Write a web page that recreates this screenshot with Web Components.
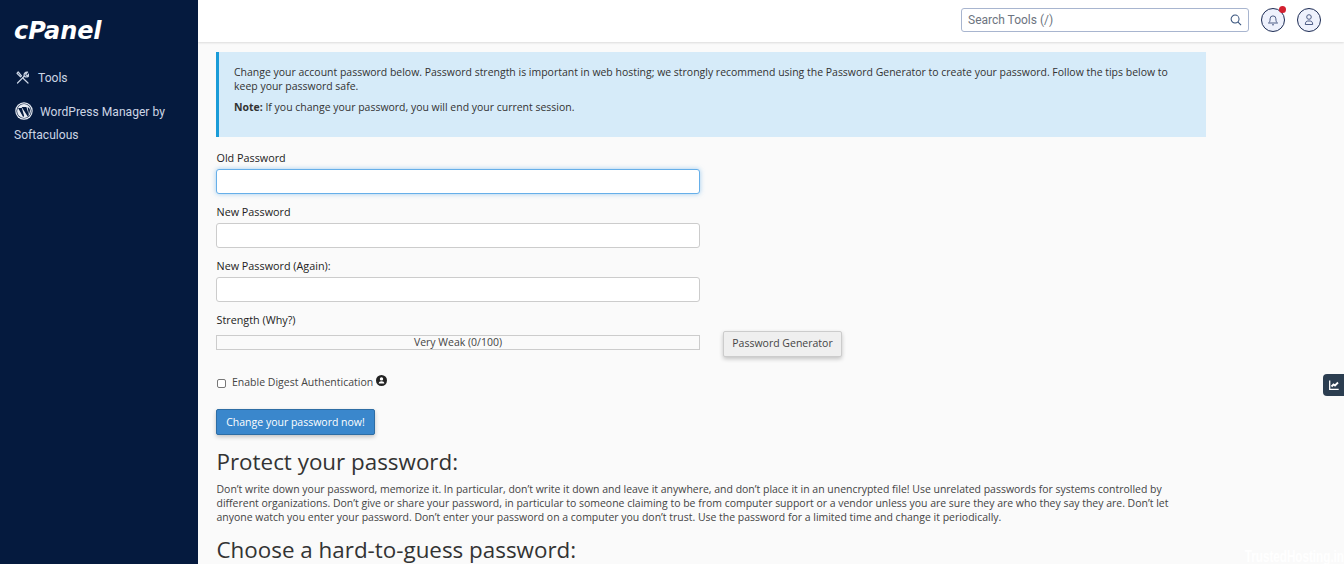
<!DOCTYPE html>
<html lang="en">
<head>
<meta charset="utf-8">
<title>Change Password - cPanel</title>
<style>
html, body { margin: 0; height: 564px; overflow: hidden; background: #fafafa; }
</style>
</head>
<body>
<cp-app>
	<cp-sidebar slot="side"></cp-sidebar>
	<cp-topbar slot="top"></cp-topbar>
	<cp-alert>
		<p>Change your account password below. Password strength is important in web hosting; we strongly recommend using the Password Generator to create your password. Follow the tips below to keep your password safe.</p>
		<p><b>Note:</b> If you change your password, you will end your current session.</p>
	</cp-alert>
	<cp-field label="Old Password" focused></cp-field>
	<cp-field label="New Password"></cp-field>
	<cp-field label="New Password (Again):"></cp-field>
	<cp-strength></cp-strength>
	<cp-digest></cp-digest>
	<cp-submit>Change your password now!</cp-submit>
	<cp-tip heading="Protect your password:">Don’t write down your password, memorize it. In particular, don’t write it down and leave it anywhere, and don’t place it in an unencrypted file! Use unrelated passwords for systems controlled by different organizations. Don’t give or share your password, in particular to someone claiming to be from computer support or a vendor unless you are sure they are who they say they are. Don’t let anyone watch you enter your password. Don’t enter your password on a computer you don’t trust. Use the password for a limited time and change it periodically.</cp-tip>
	<cp-tip heading="Choose a hard-to-guess password:" last></cp-tip>
	<cp-sidetab slot="over"></cp-sidetab>
	<cp-watermark slot="over"></cp-watermark>
</cp-app>

<script>
(function() {
	function define(name, html, init) {
		customElements.define(name, class extends HTMLElement {
			constructor() {
				super();
				this.attachShadow({mode: "open"}).innerHTML = html;
			}
			connectedCallback() {
				if (init) init(this, this.shadowRoot);
			}
		});
	}

	define("cp-app", `
		<style>
		:host { display: grid; grid-template-columns: 198px 1fr; height: 564px; overflow: hidden; position: relative; font-family: "Open Sans", sans-serif; }
		.main { display: flex; flex-direction: column; min-width: 0; height: 564px; overflow: hidden; }
		.content { padding: 10px 138px 0 18px; }
		</style>
		<slot name="side"></slot>
		<div class="main">
			<slot name="top"></slot>
			<div class="content"><slot></slot></div>
		</div>
		<slot name="over"></slot>
	`);

	define("cp-sidebar", `
		<style>
		:host { display: block; background: #051a3e; color: #ccd5e4; font: 12.100px/23px Roboto, sans-serif; height: 564px; }
		.logo { display: block; padding: 16px 0 0 14px; height: 35px; font: italic 700 24px/30px "DejaVu Sans", sans-serif; color: #fff; letter-spacing: -0.1px; }
		nav { padding: 15px 14px 0; margin-top: 1px; }
		a { display: block; color: inherit; text-decoration: none; margin-bottom: 11px; }
		svg { vertical-align: middle; }
		.t svg { margin: -3px 9px 0 2px; }
		.w svg { margin: -3px 7px 0 1px; }
		</style>
		<span class="logo">cPanel</span>
		<nav>
			<a class="t" href="#"><svg width="13" height="13" viewBox="0 0 13 13" fill="none" stroke="#ccd5e4" stroke-width="1.200" stroke-linecap="round" stroke-linejoin="round"><path d="M1.500 12 8.500 5"/><path d="M8.300 5.200C7.500 3 9.300.6 11.600 1.100L9.800 3l.4 1.300 1.300.4L13 3c.3 2.300-2 4-4.700 2.200"/><path d="M1 2.400 2.200 1l3.300 3.800-1 1zM6.800 7 12 12"/></svg>Tools</a>
			<a class="w" href="#"><svg width="18" height="18" viewBox="0 0 19 19"><circle cx="9.500" cy="9.500" r="9.200" fill="#e8ecf3"/><circle cx="9.500" cy="9.500" r="8" fill="#051a3e"/><circle cx="9.500" cy="9.500" r="7.300" fill="#e8ecf3"/><path d="M3.300 6.400h3.900l2.500 8.400-1.100 1.100zM7 5.300h5l2.700 8.500-1.300 1.400zM13.300 5.600c1.600.6 2.500 1.700 2.500 3.500 0 1.300-.5 2.500-1.100 3.700z" fill="#051a3e"/></svg>WordPress Manager by Softaculous</a>
		</nav>
	`);

	define("cp-topbar", `
		<style>
		:host { display: flex; flex: none; align-items: center; justify-content: flex-end; height: 42px; background: #fff; box-shadow: 0 1px 2px rgba(0,0,0,.12); padding: 0 23px 3px 0; box-sizing: border-box; gap: 12px; position: relative; }
		.search { display: flex; align-items: center; justify-content: space-between; box-sizing: border-box; width: 288px; height: 24px; border: 1px solid #a8b5cf; border-radius: 3px; padding: 0 6px; color: #6d7480; font: 12px Roboto, sans-serif; }
		.round { position: relative; box-sizing: border-box; display: flex; align-items: center; justify-content: center; width: 24px; height: 24px; border: 1px solid #1b2a52; border-radius: 50%; background: #eef1fc; }
		.dot { position: absolute; top: -3px; right: -2px; width: 7px; height: 7px; border-radius: 50%; background: #d3202f; }
		</style>
		<div class="search"><span>Search Tools (/)</span>
			<svg width="12" height="12" viewBox="0 0 13 13" fill="none" stroke="#34507a" stroke-width="1.100"><circle cx="5.500" cy="5.500" r="4.300"/><path d="M8.700 8.700 12 12"/></svg>
		</div>
		<div class="round"><svg width="12" height="12" viewBox="0 0 12 12" fill="none" stroke="#4d5c85" stroke-width="1"><path d="M1.500 9h9c-1-.8-1.600-1.500-1.600-4.200a2.900 2.900 0 0 0-5.800 0C3.100 7.500 2.500 8.200 1.500 9zM5 10.800h2"/></svg><span class="dot"></span></div>
		<div class="round"><svg width="12" height="12" viewBox="0 0 12 12" fill="none" stroke="#4d5c85" stroke-width="1"><circle cx="6" cy="3" r="2.300"/><path d="M2.300 10.500c0-2.500 1.200-3.500 2.500-3.500h2.400c1.300 0 2.500 1 2.500 3.500z"/></svg></div>
	`);

	define("cp-alert", `
		<style>
		:host { display: block; box-sizing: border-box; height: 85px; padding: 13px 18px 0 15px; background: #d6ebf9; border-left: 3px solid #1a9cd8; color: #333; font-size: 10.480px; line-height: 14px; }
		::slotted(p) { margin: 0 0 7px; }
		</style>
		<slot></slot>
	`);

	define("cp-field", `
		<style>
		:host { display: block; margin-top: 14px; width: 484px; color: #222; font-size: 10.800px; line-height: 14px; }
		:host(:not([focused])) { margin-top: 11px; }
		label { display: block; padding-left: .5px; }
		.box { box-sizing: border-box; height: 25px; margin-top: 4px; background: #fff; border: 1px solid #ccc; border-radius: 3px; }
		:host([focused]) .box { border-color: #66afe9; box-shadow: 0 0 5px rgba(102,175,233,.6); }
		</style>
		<label></label><div class="box"></div>
	`, function(el, root) {
		root.querySelector("label").textContent = el.getAttribute("label");
	});

	define("cp-strength", `
		<style>
		:host { display: block; margin-top: 11px; color: #222; font-size: 10.800px; line-height: 14px; }
		.label { padding-left: .5px; }
		.row { display: flex; align-items: flex-start; gap: 23px; margin-top: 4px; font-size: 10.500px; }
		.bar { box-sizing: border-box; width: 484px; height: 15px; margin-top: 4px; border: 1px solid #ccc; text-align: center; line-height: 13px; color: #444; }
		.gen { box-sizing: border-box; width: 119px; height: 26px; padding-bottom: 2px; display: flex; align-items: center; justify-content: center; background: #efefef; border: 1px solid #ccc; border-radius: 2px; box-shadow: 0 2px 4px rgba(0,0,0,.22); color: #444; }
		</style>
		<div class="label">Strength (Why?)</div>
		<div class="row"><div class="bar">Very Weak (0/100)</div><div class="gen">Password Generator</div></div>
	`);

	define("cp-digest", `
		<style>
		:host { display: flex; align-items: center; margin-top: 18px; color: #444; font-size: 10.500px; line-height: 14px; }
		i { display: block; box-sizing: border-box; width: 9px; height: 9px; margin: 2px 6px 0 1px; border: 1px solid #777; border-radius: 2px; background: #fff; }
		svg { margin: -3px 0 0 3px; }
		</style>
		<i></i><span>Enable Digest Authentication</span>
		<svg width="11" height="11" viewBox="0 0 11 11"><circle cx="5.500" cy="5.500" r="5.500" fill="#222"/><circle cx="5.500" cy="3.900" r="1.700" fill="#fff"/><path d="M2.700 8.500c0-1.600 1.200-2.300 2.800-2.300s2.800.7 2.800 2.300z" fill="#fff"/></svg>
	`);

	define("cp-submit", `
		<style>
		:host { display: flex; align-items: center; justify-content: center; box-sizing: border-box; width: 159px; height: 26px; margin-top: 20px; background: #3a87cc; border: 1px solid #2e6da4; border-radius: 2px; box-shadow: 0 2px 4px rgba(0,0,0,.22); color: #fff; font-size: 10.500px; }
		</style>
		<slot></slot>
	`);

	define("cp-tip", `
		<style>
		:host { display: block; color: #333; padding-left: .5px; }
		h2 { margin: 14px 0 0; font-size: 22.400px; line-height: 26px; font-weight: 400; color: #333; }
		:host([last]) h2 { margin-top: 13px; }
		p { margin: 7px 0 0; font-size: 10.480px; line-height: 14px; color: #444; }
		</style>
		<h2></h2><p><slot></slot></p>
	`, function(el, root) {
		root.querySelector("h2").textContent = el.getAttribute("heading");
	});

	define("cp-sidetab", `
		<style>
		:host { position: absolute; right: 0; top: 374px; width: 21px; height: 22px; display: flex; align-items: center; justify-content: center; background: #2b3d50; border-radius: 4px 0 0 4px; }
		</style>
		<svg width="10" height="10" viewBox="0 0 10 10" fill="none" stroke="#fff"><path d="M.7 .5v8.800h9" stroke-width="1.300"/><path d="M2.500 6.500l2-2 1.500 1L9 2.500" stroke-width="1.800"/></svg>
	`);

	define("cp-watermark", `
		<style>
		:host { position: absolute; right: 0; top: 549px; color: #fff; font: 700 16px/16px "Liberation Sans", sans-serif; white-space: nowrap; transform: scaleX(.73); transform-origin: right center; }
		</style>
		TrustedHosting.in
	`);
})();
</script>
</body>
</html>
